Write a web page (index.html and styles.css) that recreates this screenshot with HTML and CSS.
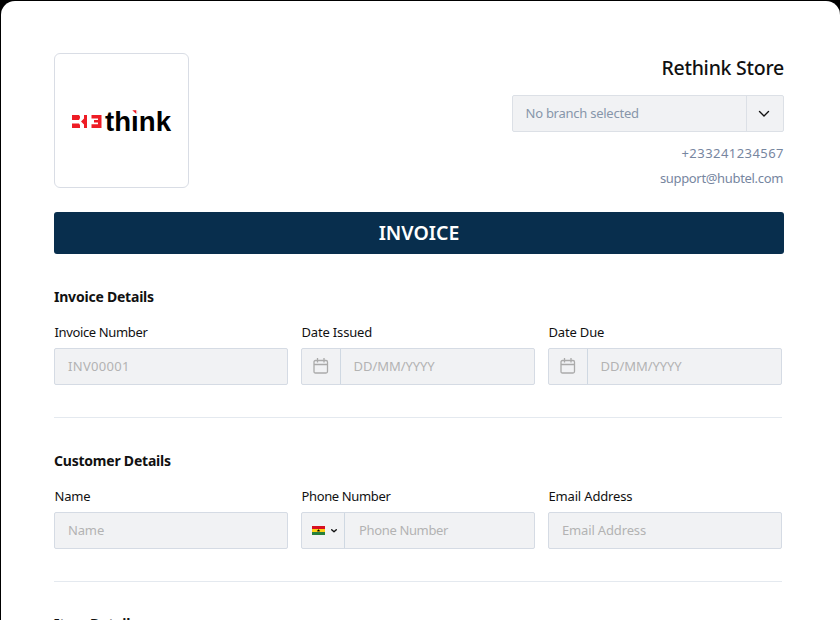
FILE: index.html
```html
<!DOCTYPE html>
<html lang="en">
<head>
<meta charset="utf-8">
<title>Invoice</title>
<link rel="stylesheet" href="styles.css">
</head>
<body>
<main class="sheet">
  <header class="top">
    <div class="logo">
      <svg width="104" height="28" viewBox="0 0 104 28" aria-label="REthink">
        <g fill="#ee1c25">
          <path d="M2 8H9L10 9.500V11L9 13H2ZM2 16.500H9L10 18V21H2ZM17 8V21H14V17.500L11 14.500L14 11.500V8Z"/>
          <path d="M21.500 8H31.500V21H21.500V17.200H28V15.500H24V13H28V11.500H21.500Z"/>
        </g>
        <text class="wordmark" x="35" y="24" textLength="66" lengthAdjust="spacingAndGlyphs">think</text>
        <path fill="#fff" d="M61.500 2H67V7.500H61.500Z"/>
        <path fill="#ee1c25" d="M62.300 3.300H66.300V7Z"/>
      </svg>
    </div>
    <div class="store">
      <h1 class="store-name">Rethink Store</h1>
      <div class="select">
        <span class="select-value">No branch selected</span>
        <span class="select-toggle"><svg width="12" height="8" viewBox="0 0 12 8"><path class="chevron" d="M1.500 1.500L6 6L10.500 1.500"/></svg></span>
      </div>
      <p class="contact phone">+233241234567</p>
      <p class="contact email">support@hubtel.com</p>
    </div>
  </header>
  <div class="banner"><span>INVOICE</span></div>

  <section class="section">
    <h2 class="title">Invoice Details</h2>
    <div class="fields">
      <div class="field"><label class="label tight">Invoice Number</label><div class="input"><span class="hint code">INV00001</span></div></div>
      <div class="field"><label class="label">Date Issued</label><div class="input">
        <span class="addon"><svg class="calendar" width="16" height="17" viewBox="0 0 16 17"><path d="M2.500 2.500H13Q14.500 2.500 14.500 4V13.500Q14.500 15 13 15H2.500Q1 15 1 13.500V4Q1 2.500 2.500 2.500ZM1 6.500H14.500M4.500 0V4.500M11 0V4.500"/></svg></span><span class="hint date">DD/MM/YYYY</span></div></div>
      <div class="field"><label class="label">Date Due</label><div class="input">
        <span class="addon"><svg class="calendar" width="16" height="17" viewBox="0 0 16 17"><path d="M2.500 2.500H13Q14.500 2.500 14.500 4V13.500Q14.500 15 13 15H2.500Q1 15 1 13.500V4Q1 2.500 2.500 2.500ZM1 6.500H14.500M4.500 0V4.500M11 0V4.500"/></svg></span><span class="hint date">DD/MM/YYYY</span></div></div>
    </div>
  </section>

  <section class="section">
    <h2 class="title">Customer Details</h2>
    <div class="fields">
      <div class="field"><label class="label">Name</label><div class="input"><span class="hint">Name</span></div></div>
      <div class="field"><label class="label tight">Phone Number</label><div class="input">
        <span class="addon country">
          <svg width="13" height="9" viewBox="0 0 13 9"><path fill="#d80f20" d="M0 0H13V3H0Z"/><path fill="#fcd116" d="M0 3H13V6H0Z"/><path fill="#26803c" d="M0 6H13V9H0Z"/><path d="M6.500 3L7 4.100H8.200L7.200 4.800L7.600 6L6.500 5.300L5.400 6L5.800 4.800L4.800 4.100H6Z"/></svg>
          <svg width="6" height="4" viewBox="0 0 6 4"><path class="chevron" d="M.7 .8L3 2.800L5.300 .8"/></svg>
        </span><span class="hint wide">Phone Number</span></div></div>
      <div class="field"><label class="label">Email Address</label><div class="input"><span class="hint">Email Address</span></div></div>
    </div>
  </section>

  <section class="section last">
    <h2 class="title">Item Details</h2>
  </section>
</main>
</body>
</html>
```
FILE: styles.css
```css
* { box-sizing: border-box; }
html { background: #000; }
body { margin: 0; height: 620px; overflow: hidden; font-family: "Noto Sans", sans-serif; color: #111; }
h1, h2, p { margin: 0; }
svg { display: block; }
.sheet { height: 619px; margin: 1px 0 0 1px; padding: 52px 56px 0 53px; background: #fff; border-radius: 14px 14px 0 0; overflow: hidden; }
.top { display: flex; justify-content: space-between; height: 159px; }
.logo { display: flex; align-items: center; justify-content: center; width: 135px; height: 135px; border: 1px solid #d9dde5; border-radius: 6px; }
.wordmark { font: bold 27px "Liberation Sans", sans-serif; fill: #000; }
.store { width: 272px; text-align: right; }
.store-name { height: 42px; line-height: 30px; font-size: 19.500px; font-weight: 500; letter-spacing: -.25px; white-space: nowrap; }
.select { display: flex; height: 37px; margin-bottom: 9px; border: 1px solid #dce0e6; border-radius: 2px; background: #f1f2f4; }
.select-value { flex: 1; padding-left: 12.500px; line-height: 35px; text-align: left; font-size: 13px; letter-spacing: -.25px; color: #8796aa; }
.select-toggle { display: flex; align-items: center; justify-content: center; width: 37px; padding-right: 2px; border-left: 1px solid #dce0e6; }
.chevron { fill: none; stroke: #111; stroke-width: 1.400; stroke-linecap: round; stroke-linejoin: round; }
.contact { height: 25px; line-height: 25px; font-size: 13px; color: #77869f; }
.phone { letter-spacing: .45px; }
.email { padding-right: 1px; letter-spacing: -.33px; }
.banner { height: 42px; width: 730px; line-height: 42px; border-radius: 3px; background: #082e4d; color: #fff; text-align: center; font-size: 19.500px; font-weight: 600; }
.section { width: 728px; height: 164px; padding-top: 32px; border-bottom: 1px solid #e4e9ef; }
.title { height: 22px; line-height: 22px; font-size: 14px; font-weight: 700; letter-spacing: -.22px; }
.last { height: 37px; padding-top: 31px; border: 0; }
.fields { display: grid; grid-template-columns: repeat(3, 234px); column-gap: 13px; padding: 13px 0 0; }
.label { display: block; height: 27px; line-height: 22px; padding-left: .500px; font-size: 13px; letter-spacing: -.17px; }
.label.tight { letter-spacing: -.36px; }
.input { display: flex; height: 37px; border: 1px solid #d5dbe4; border-radius: 2px; background: #f1f2f4; }
.hint { padding-left: 13px; line-height: 35px; font-size: 13px; letter-spacing: -.15px; color: #b3b3b3; }
.wide { padding-left: 14px; letter-spacing: -.35px; }
.code { letter-spacing: .3px; }
.date { padding-left: 12.500px; letter-spacing: -.05px; }
.addon { display: flex; align-items: center; justify-content: center; width: 39px; border-right: 1px solid #cfd8e2; }
.calendar { fill: none; stroke: #aaa; stroke-width: 1.300; }
.country { width: 43px; padding-left: 2px; gap: 6px; }
```
